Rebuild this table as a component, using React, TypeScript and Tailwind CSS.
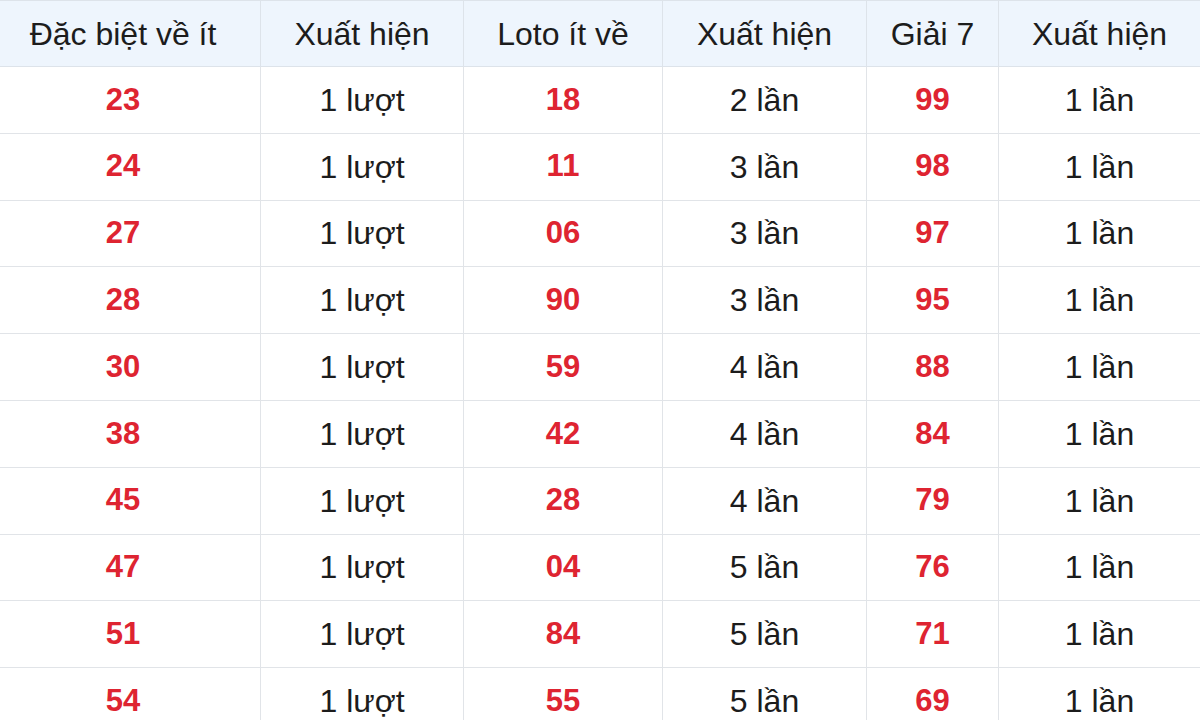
const rows: [string, string, string, string, string, string][] = [
  ['23', '1 lượt', '18', '2 lần', '99', '1 lần'],
  ['24', '1 lượt', '11', '3 lần', '98', '1 lần'],
  ['27', '1 lượt', '06', '3 lần', '97', '1 lần'],
  ['28', '1 lượt', '90', '3 lần', '95', '1 lần'],
  ['30', '1 lượt', '59', '4 lần', '88', '1 lần'],
  ['38', '1 lượt', '42', '4 lần', '84', '1 lần'],
  ['45', '1 lượt', '28', '4 lần', '79', '1 lần'],
  ['47', '1 lượt', '04', '5 lần', '76', '1 lần'],
  ['51', '1 lượt', '84', '5 lần', '71', '1 lần'],
  ['54', '1 lượt', '55', '5 lần', '69', '1 lần'],
];

const headers = ['Đặc biệt về ít', 'Xuất hiện', 'Loto ít về', 'Xuất hiện', 'Giải 7', 'Xuất hiện'];

const cols = 'grid grid-cols-[260px_203px_199px_204px_132px_202px]';

export default function App() {
  return (
    <div className="w-[1200px] h-[720px] overflow-hidden bg-white font-['Liberation_Sans',Arial,sans-serif] text-[#1c1c1c]">
      <div className={`${cols} h-[67px] bg-[#eef5fd] border-y border-[#dde3ea]`}>
        {headers.map((h, i) => (
          <div
            key={i}
            className={`flex items-center justify-center text-[32px] ${
              i > 0 ? 'border-l border-[#dde3ea]' : 'pr-[14px]'
            }`}
          >
            {h}
          </div>
        ))}
      </div>
      {rows.map((r, ri) => (
        <div key={ri} className={`${cols} h-[66.8px] border-b border-[#e1e4e8]`}>
          {r.map((c, i) => (
            <div
              key={i}
              className={`flex items-center justify-center ${
                i > 0 ? 'border-l border-[#e1e4e8]' : 'pr-[14px]'
              } ${i % 2 === 0 ? 'text-[31px] font-bold text-[#de2431]' : 'text-[32px]'}`}
            >
              {c}
            </div>
          ))}
        </div>
      ))}
    </div>
  );
}
